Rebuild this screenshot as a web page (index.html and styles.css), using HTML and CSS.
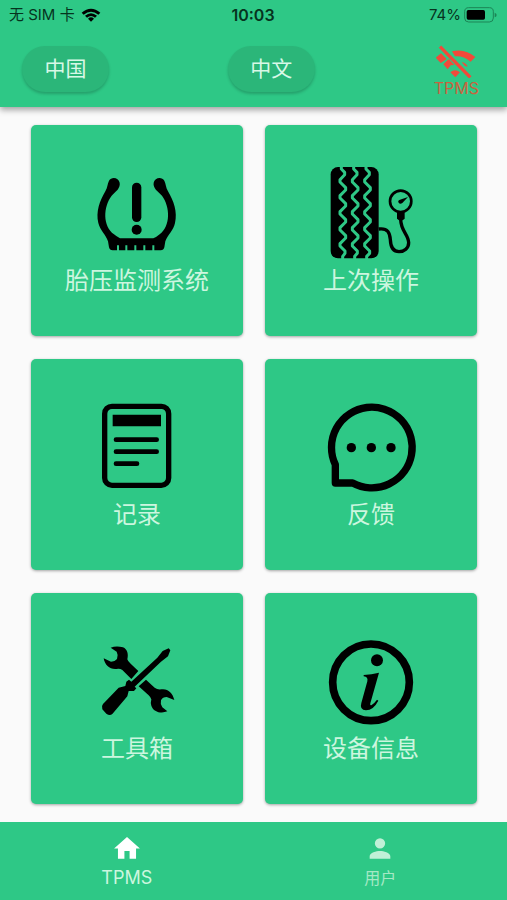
FILE: index.html
```html
<!DOCTYPE html>
<html lang="zh-CN">
<head>
<meta charset="utf-8">
<meta name="viewport" content="width=device-width, initial-scale=1">
<title>TPMS</title>
<link rel="stylesheet" href="styles.css">
</head>
<body>
<header class="top">
  <div class="status">
    <div class="status-left">
      <span>无 SIM 卡</span>
      <svg class="wifi" viewBox="0 0 60 42" aria-hidden="true">
        <path d="M2 14Q30-10 58 14L52 20Q30 2 8 20Z"/>
        <path d="M12 23Q30 8 48 23L42 29Q30 19 18 29Z"/>
        <path d="M21 32Q30 24 39 32L30 41Z"/>
      </svg>
    </div>
    <strong class="time">10:03</strong>
    <div class="status-right">
      <span>74%</span>
      <svg class="battery" viewBox="0 0 99 48" aria-hidden="true">
        <rect x="2" y="2" width="86" height="43" rx="12" fill="none" stroke="#1c8556" stroke-width="3"/>
        <rect x="8" y="9" width="55" height="29" rx="5"/>
        <path d="M92 17Q98 19 98 24T92 31Z" fill="#1c8556"/>
      </svg>
    </div>
  </div>
  <div class="toolbar">
    <button class="pill" type="button">中国</button>
    <button class="pill" type="button">中文</button>
    <button class="link-state" type="button">
      <svg class="wifi-off" viewBox="0 0 120 99" aria-hidden="true">
        <path d="M48 19Q86 9 118 36L104 50Q80 31 57 34Z"/>
        <path d="M-1 38L15 25L32 42L14 54Z"/>
        <path d="M22 58L38 42L55 60L44 61L35 73Z"/>
        <path d="M77 51Q91 55 95 65L86 62Z"/>
        <path d="M43 82Q57 69 72 82L58 97Z"/>
        <path d="M12 5L103 97" fill="none" stroke="#f2493a" stroke-width="10"/>
      </svg>
      <span>TPMS</span>
    </button>
  </div>
</header>

<main class="grid">
  <button class="card" type="button">
    <svg class="icon" viewBox="12 0 288 288" aria-hidden="true">
      <path d="M72 47C79 34 101 37 104 53C107 70 91 80 80 92C54 126 53 183 87 208Q95 215 105 220H205Q215 216 224 208C257 183 256 126 231 92C220 80 203 70 206 53C209 37 231 34 238 47C243 57 242 67 249 79C266 108 278 141 270 174C266 195 248 210 241 229L238 247Q236 256 227 256H208V241H202V256H181V241H175V256H154V241H148V256H127V241H121V256H102V241H96V256H83Q74 256 72 247L69 229C63 210 45 195 40 174C32 141 44 108 61 79C68 67 67 57 72 47Z"/>
      <rect x="141" y="53" width="28" height="118" rx="14"/>
      <circle cx="155" cy="194" r="15"/>
    </svg>
    <span>胎压监测系统</span>
  </button>
  <button class="card" type="button">
    <svg class="icon" viewBox="9 30 288 288" aria-hidden="true">
      <rect x="32" y="36" width="144" height="274" rx="22"/>
      <g fill="none" stroke="#2ec886" stroke-width="9" stroke-linejoin="round">
        <path d="M64 34V42L74 52V59L60 74V81L77 98V105L60 122V129L77 146V153L60 170V177L77 194V201L60 218V225L77 242V249L60 266V273L75 288V295L68 304V312"/>
        <path d="M101 34V42L111 52V59L97 74V81L114 98V105L97 122V129L114 146V153L97 170V177L114 194V201L97 218V225L114 242V249L97 266V273L112 288V295L104 304V312"/>
        <path d="M138 34V42L148 52V59L134 74V81L151 98V105L134 122V129L151 146V153L134 170V177L151 194V201L134 218V225L151 242V249L134 266V273L149 288V295L140 304V312"/>
      </g>
      <circle cx="242" cy="139" r="32" fill="none" stroke="#000" stroke-width="8"/>
      <path d="M264 126L247 144Q240 149 236 143T240 134ZM231 168H254V191L248 196H237L231 191Z"/>
      <path d="M176 222C204 218 210 235 211 254C212 278 222 290 237 290C253 290 266 279 266 263C265 237 243 229 242 194" fill="none" stroke="#000" stroke-width="10"/>
    </svg>
    <span>上次操作</span>
  </button>
  <button class="card" type="button">
    <svg class="icon" viewBox="-3 12 288 288" aria-hidden="true">
      <rect x="44" y="34" width="192" height="237" rx="22" fill="none" stroke="#000" stroke-width="16"/>
      <path d="M68 59H213V94H68Z"/>
      <path d="M78 134H200M78 170H200M78 206H141" fill="none" stroke="#000" stroke-width="14" stroke-linecap="round"/>
    </svg>
    <span>记录</span>
  </button>
  <button class="card" type="button">
    <svg class="icon" viewBox="9 12 288 288" aria-hidden="true">
      <path d="M46 264V209A121 121 0 1 1 98 264Z" fill="none" stroke="#000" stroke-width="22" stroke-linejoin="round"/>
      <circle cx="94" cy="158" r="14"/><circle cx="154" cy="158" r="14"/><circle cx="213" cy="158" r="14"/>
    </svg>
    <span>反馈</span>
  </button>
  <button class="card" type="button">
    <svg class="icon" viewBox="-3 -6 288 288" aria-hidden="true">
      <path d="M62 38Q79 31 99 37C112 43 116 57 112 73Q114 80 122 86L145 108L124 132L97 105Q90 100 79 102C60 104 44 90 41 70L63 80Q75 80 81 72Q86 61 80 50Z"/>
      <path d="M146 154L168 134L194 158Q203 165 214 163C233 160 248 173 253 195L230 186Q218 186 213 196Q210 207 217 217L232 229C214 237 190 231 184 212Q181 204 184 193Q183 188 176 181Z"/>
      <path d="M202 68L218 48L236 40L241 46L234 64L213 80L134 155L139 160L132 168H116L112 184L67 237Q59 243 49 236L37 223Q33 214 39 207L86 158L106 153L109 140L117 134L124 140Z"/>
    </svg>
    <span>工具箱</span>
  </button>
  <button class="card" type="button">
    <svg class="icon" viewBox="9 -6 288 288" aria-hidden="true">
      <circle cx="153" cy="142" r="115" fill="none" stroke="#000" stroke-width="23"/>
      <circle cx="171" cy="76" r="18"/>
      <path d="M131 120Q155 119 177 113L151 205Q149 213 155 210Q163 205 171 194L175 197Q160 226 138 226Q118 225 124 204L142 139Q145 126 131 124Z"/>
    </svg>
    <span>设备信息</span>
  </button>
</main>

<nav class="tabs">
  <a class="tab active" href="#home">
    <svg class="tab-icon" viewBox="0 0 24 24" aria-hidden="true"><path d="M10 20v-6h4v6h5v-8h3L12 3 2 12h3v8z"/></svg>
    <span>TPMS</span>
  </a>
  <a class="tab" href="#user">
    <svg class="tab-icon" viewBox="0 0 24 24" aria-hidden="true"><path d="M12 12a4 4 0 1 0 0-8 4 4 0 0 0 0 8zm0 2c-2.700 0-8 1.300-8 4v2h16v-2c0-2.700-5.300-4-8-4z"/></svg>
    <span>用户</span>
  </a>
</nav>
</body>
</html>
```
FILE: styles.css
```css
* {
  box-sizing: border-box;
}

body {
  margin: 0;
  min-height: 100vh;
  display: flex;
  flex-direction: column;
  background: #fafafa;
  font-family: Inter, "Noto Sans CJK SC", sans-serif;
}

button {
  margin: 0;
  padding: 0;
  border: 0;
  font: inherit;
  cursor: pointer;
}

svg {
  display: block;
}

.top {
  background: #2ec886;
  box-shadow: 0 3px 6px rgba(0, 0, 0, 0.35);
}

.status {
  display: grid;
  grid-template-columns: 1fr auto 1fr;
  align-items: center;
  height: 30px;
  padding: 0 10px 0 9px;
  color: #06331e;
  font-size: 15px;
  line-height: 20px;
}

.status-left,
.status-right {
  display: flex;
  align-items: center;
  gap: 6px;
}

.status-right {
  justify-content: flex-end;
  gap: 3px;
}

.time {
  font-size: 16px;
  font-weight: 600;
}

.wifi {
  width: 20px;
  height: 14px;
}

.battery {
  width: 33px;
  height: 16px;
}

.toolbar {
  display: flex;
  justify-content: space-between;
  align-items: center;
  height: 77px;
  padding: 0 28px 0 22px;
}

.pill {
  width: 87px;
  height: 46px;
  padding-bottom: 3px;
  border-radius: 23px;
  background: #2bb679;
  color: #d8f8e7;
  font-size: 21px;
  box-shadow: 0 2px 3px rgba(0, 0, 0, 0.2);
}

.link-state {
  display: flex;
  flex-direction: column;
  align-items: center;
  padding-top: 6px;
  background: none;
  color: #c9633f;
  font-size: 16px;
  line-height: 20px;
}

.wifi-off {
  width: 40px;
  height: 33px;
  fill: #f2493a;
}

.grid {
  flex: 1;
  display: grid;
  grid-template-columns: 1fr 1fr;
  grid-auto-rows: 1fr;
  gap: 23px 22px;
  padding: 18px 30px 18px 31px;
}

.card {
  display: flex;
  flex-direction: column;
  align-items: center;
  justify-content: center;
  padding-top: 5px;
  border-radius: 5px;
  background: #2ec886;
  color: #ccf6df;
  font-size: 24px;
  line-height: 40px;
  box-shadow: 0 1px 3px rgba(0, 0, 0, 0.35);
}

.icon {
  width: 96px;
  height: 96px;
}

.tabs {
  display: grid;
  grid-template-columns: 1fr 1fr;
  height: 78px;
  background: #2ec886;
}

.tab {
  display: flex;
  flex-direction: column;
  align-items: center;
  padding-top: 11px;
  color: #a5e8c5;
  font-size: 16px;
  line-height: 28px;
  text-decoration: none;
}

.tab.active {
  color: #ccf6df;
  font-size: 18px;
}

.tab-icon {
  width: 32px;
  height: 31px;
  fill: #c0f0d7;
}

.active .tab-icon {
  fill: #fff;
}
```
